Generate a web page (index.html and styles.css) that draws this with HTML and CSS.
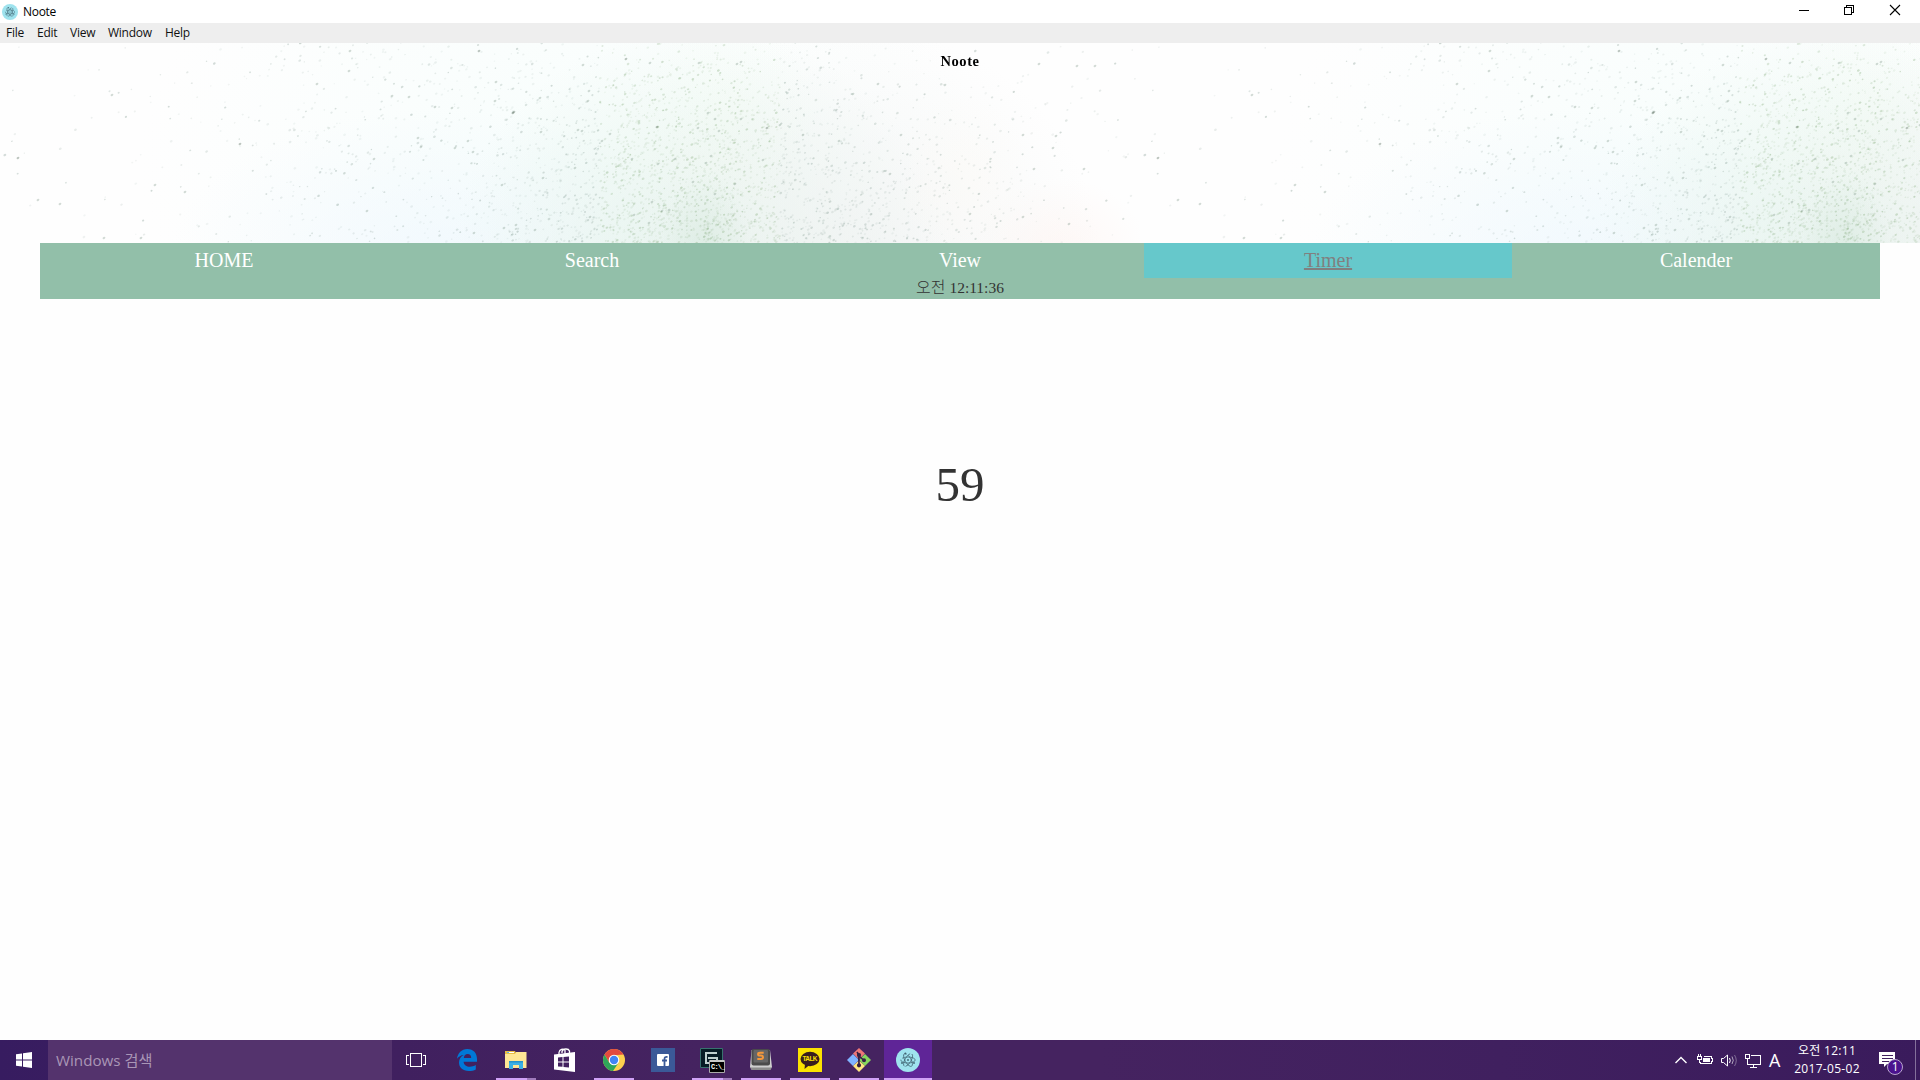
FILE: index.html
```
<!DOCTYPE html>
<html lang="ko">
<head>
<meta charset="utf-8">
<title>Noote</title>
<link rel="stylesheet" href="styles.css">
</head>
<body>
<svg width="0" height="0" class="defs">
  <symbol id="atom" viewBox="0 0 24 24">
    <circle cx="12" cy="12" r="12" fill="#9fe3ee"/>
    <g fill="none" stroke="#466b78" stroke-width=".8">
      <ellipse cx="12" cy="12" rx="7.200" ry="3" stroke-dasharray="17 2"/>
      <ellipse cx="12" cy="12" rx="7.200" ry="3" transform="rotate(60 12 12)" stroke-dasharray="19 2"/>
      <ellipse cx="12" cy="12" rx="7.200" ry="3" transform="rotate(120 12 12)" stroke-dasharray="15 2"/>
    </g>
    <g fill="#3f6370"><circle cx="12" cy="12" r=".9"/><circle cx="6" cy="15" r=".9"/><circle cx="18" cy="15" r=".9"/><circle cx="9.400" cy="5.500" r=".9"/></g>
  </symbol>
</svg>

<div class="titlebar">
  <svg class="app-icon" width="16" height="16"><use href="#atom"/></svg>
  <span class="title">Noote</span>
  <div class="controls">
    <svg width="46" height="20" viewBox="0 0 46 20" shape-rendering="crispEdges"><path d="M17 10.500h10" stroke="#000"/></svg>
    <svg width="46" height="20" viewBox="0 0 46 20" shape-rendering="crispEdges"><path d="M16.500 7.500h7v7h-7zM18.500 7.500v-2h7v7h-2" fill="none" stroke="#000"/></svg>
    <svg width="46" height="20" viewBox="0 0 46 20"><path d="M16 5l10 10M26 5l-10 10" stroke="#000" stroke-width="1.100"/></svg>
  </div>
</div>
<nav class="menubar"><span class="m-file">File</span><span class="m-edit">Edit</span><span class="m-view">View</span><span class="m-window">Window</span><span class="m-help">Help</span></nav>

<header class="banner">
  <canvas id="paint" class="paint" width="1920" height="200"></canvas>
  <h1>Noote</h1>
</header>

<section class="nav-panel">
  <nav class="tabs">
    <a>HOME</a><a>Search</a><a>View</a><a class="active">Timer</a><a>Calender</a>
  </nav>
  <div class="clock"><span class="ampm">오전</span> 12:11:36</div>
</section>

<main class="content"><div class="count">59</div></main>

<footer class="taskbar">
  <div class="start">
    <svg width="16" height="16" viewBox="0 0 16 16" fill="#fff"><path d="M0 2.200l6-.8V7.500H0zM7 1.200l9-1.200v7.500H7zM0 8.500h6v6.100l-6-.8zM7 8.500h9V16l-9-1.200z"/></svg>
  </div>
  <div class="search">Windows 검색</div>
  <div class="btn task-view">
    <svg width="20" height="14" viewBox="0 0 20 14" fill="none" stroke="#fff" shape-rendering="crispEdges"><path d="M4.500.5h11v13h-11zM3 2.500H.5v9H3M17 2.500h2.500v9H17"/></svg>
  </div>
  <div class="btn"><svg width="20" height="22" viewBox="0 0 20 22"><path fill="#0078d7" d="M0 9.800C.7 4.300 4.500 0 10.300 0 16.500 0 20 4.300 20 10v2.700H6.600c.2 3.400 3 5 6.200 5 2.300 0 4.200-.6 6-1.700v4.500c-1.900 1-4.300 1.500-7 1.500C5.600 22 2 18.500 2 13.600 2 10.300 3.800 7.500 6.700 6 4 6.200 1.600 7.600 0 9.800zM6.800 9h7.400c0-2.400-1.300-3.900-3.600-3.900C8.500 5.100 7.100 6.600 6.800 9z"/></svg></div>
  <div class="btn multi"><svg width="22" height="18" viewBox="0 0 22 18"><path fill="#e9bd45" d="M0 0h10l1 2h10v5H0z"/><path fill="#fff" d="M2 1h7v1H2z"/><path fill="#5cb7e9" d="M2 1h2v1H2z"/><path fill="#ffe695" d="M0 3h10l1-2h10.500v16H0z"/><path fill="#3bb0e5" d="M4 10h14v8h-4v-4H8v4H4z"/><path fill="#2493cc" d="M4 10h14v1.500H4z"/></svg></div>
  <div class="btn"><svg width="22" height="24" viewBox="0 0 22 24"><path fill="none" stroke="#fff" stroke-width="1.300" d="M5 7V4.500C5.500 1.500 9 .2 11 2v4M8 5V3.500C9 .3 14.500.2 15.500 3v3"/><path fill="#fff" d="M0 6.500L21 4v20L0 21.500z"/><path fill="#42215f" d="M4 9.500l4.500-.4V13.500H4zM9.500 9l5.500-.6v5.100H9.500zM4 14.500h4.500v4.300L4 18.400zM9.500 14.500H15v5.100l-5.500-.6z"/></svg></div>
  <div class="btn running"><svg width="22" height="22" viewBox="0 0 22 22"><circle cx="11" cy="11" r="11" fill="#fdd04e"/><path fill="#e34b3e" d="M1.500 5.500A11 11 0 0 1 20.500 5.500L11 6.200 6.300 13.700z"/><path fill="#2fa65a" d="M1.500 5.500A11 11 0 0 0 10 22l5.500-8.300-4.500 2-4.700-2z"/><circle cx="11" cy="11" r="5.300" fill="#fff"/><circle cx="11" cy="11" r="4.200" fill="#4285f4"/></svg></div>
  <div class="btn"><svg width="24" height="24" viewBox="0 0 24 24"><path fill="#3b5998" d="M0 0h24v24H0z"/><rect x="6" y="6" width="12" height="12" rx="1" fill="#fff"/><path fill="none" stroke="#3b5998" stroke-width="1.800" d="M13.500 18v-7c0-1.800.8-2.300 3-2M11 12.500h5"/></svg></div>
  <div class="btn multi"><svg width="26" height="26" viewBox="0 0 26 26"><path fill="#061c25" stroke="#39726f" d="M1.500 1.500h22v19h-22z"/><path fill="none" stroke="#bdd0ce" stroke-width="2" d="M18 6H7v10h6M9 11h9v2"/><path fill="#000" stroke="#aaa" d="M10.500 13.500h15v12h-15z"/><path fill="#c9c9c9" d="M11 13h14v2H11z"/><text x="12" y="22" class="prompt">C:\_</text></svg></div>
  <div class="btn running"><svg width="24" height="24" viewBox="0 0 24 24"><path fill="#cfcfcf" d="M2.500 2h18.500l2 17-1.500 2.500h-19L1 19z"/><path fill="#8c8c8c" d="M1.500 19.500h21L21.500 22h-19z"/><rect x="2.500" y="1" width="18.500" height="16.500" rx="2" fill="#4b4b4b"/><rect x="4.500" y="2" width="14.500" height="12.500" rx="1" fill="#666"/><path fill="none" stroke="#f5983b" stroke-width="2" d="M14.700 4.800H11c-2.600 0-2.600 2.800 0 2.800h1c2.700 0 2.700 3.400 0 3.400H8.300"/></svg></div>
  <div class="btn running"><svg width="24" height="24" viewBox="0 0 24 24"><path fill="#fbe300" d="M0 0h24v24H0z"/><ellipse cx="12" cy="11" rx="9.500" ry="7.200" fill="#381e1e"/><path fill="#381e1e" d="M7 16l-.5 5 5-4z"/><text x="4.500" y="13.300" class="talk" textLength="15">TALK</text></svg></div>
  <div class="btn running"><svg width="24" height="24" viewBox="0 0 24 24"><path fill="#ee7777" d="M12 0l6 5.500-6 6-6-6z"/><path fill="#80b3ff" d="M6 6l6 6-6 6-6-6z"/><path fill="#87d65d" d="M18 6l6 6-6 6-6-6z"/><path fill="#ffe680" d="M12 12.500l6 5.500-6 6-6-6z"/><g stroke="#352044" stroke-width="1.600" fill="#352044"><path d="M10 4l2 3v10M12 8l5 4.500"/><circle cx="12" cy="7" r="1.300"/><circle cx="12" cy="17.300" r="1.300"/><circle cx="17" cy="12.300" r="1.200"/></g></svg></div>
  <div class="btn running current"><svg width="24" height="24"><use href="#atom"/></svg></div>

  <div class="tray">
    <svg width="112" height="40" viewBox="1670 0 112 40" fill="none" stroke="#fff">
      <path stroke-width="1.400" d="M1675.500 23l5.500-5.500 5.500 5.500"/>
      <g shape-rendering="crispEdges"><path d="M1704 16.500h7.500v2h1v3h-1v2h-11v-2"/><path fill="#fff" stroke="none" d="M1703 18h7v4h-7z"/><path d="M1697.500 16.500h4v3h-4zM1698.500 16v-2M1700.500 16v-2M1699.500 20v3"/></g>
      <path d="M1721.500 18.500h2l4-3.500v11l-4-3.500h-2z"/><path d="M1729.500 18q1.500 2.500 0 5"/><path d="M1732 16.500q2.500 4 0 7.500" opacity=".6"/><path d="M1734.500 15q3.500 5.500 0 11" opacity=".35"/>
      <g shape-rendering="crispEdges"><path d="M1751 15.500h9.500v9h-13v-4M1753.500 25v2.500M1750 27.500h7M1745.500 14.500h4v4h-4zM1747.500 18v6"/></g>
    </svg>
    <span class="ime">A</span>
    <div class="datetime"><span>오전 12:11</span><span>2017-05-02</span></div>
    <svg class="notice" width="26" height="28" viewBox="0 0 26 28"><path fill="#fff" d="M1 2h16v12H9l-3 3v-3H1z"/><path stroke="#42215f" d="M4 5.500h11M4 8.500h11M4 11.500h7"/><circle cx="17" cy="17" r="7.500" fill="#4a128e" stroke="#b9a5ce"/><text x="13.800" y="21.200" class="badge">1</text></svg>
    <span class="show-desktop"></span>
  </div>
</footer>
<script src="paint.js"></script>
</body>
</html>
```

FILE: styles.css
```
* { box-sizing: border-box; }
body {
  margin: 0;
  height: 1080px;
  overflow: hidden;
  display: flex;
  flex-direction: column;
  background: #fefefe;
  color: #333;
  font-family: "Liberation Serif", "Noto Sans CJK KR", serif;
}
svg { display: block; flex: none; }
.defs { position: absolute; }

.titlebar, .menubar, .taskbar {
  font-family: "Open Sans", "Noto Sans CJK KR", sans-serif;
  flex: none;
}
.titlebar {
  height: 23px;
  display: flex;
  align-items: center;
  padding-left: 2px;
  background: #fff;
  color: #000;
  font-size: 12px;
}
.title { margin-left: 5px; letter-spacing: -.3px; }
.controls { display: flex; margin-left: auto; height: 100%; }

.menubar {
  height: 20px;
  padding-left: 6px;
  display: flex;
  background: #eee;
  color: #111;
  font-size: 12px;
  line-height: 19px;
  letter-spacing: -.25px;
}
.m-file { width: 31px; }
.m-edit { width: 33px; }
.m-view { width: 38px; }
.m-window { width: 57px; }

.banner { position: relative; height: 200px; flex: none; text-align: center; }
.paint { position: absolute; left: 0; top: 0; }
.banner h1 {
  position: relative;
  margin: 0;
  padding-top: 9px;
  color: #000;
  font-size: 14.500px;
  line-height: 18px;
  letter-spacing: .6px;
}

.nav-panel { flex: none; height: 56px; margin: 0 40px; background: #92bfa9; }
.tabs { display: grid; grid-template-columns: repeat(5, 1fr); height: 35px; }
.tabs a { color: #fff; font-size: 20px; line-height: 35px; text-align: center; }
.tabs .active { background: #66c8cb; color: #808080; text-decoration: underline; }
.clock { height: 21px; font-size: 15.500px; line-height: 20px; text-align: center; }
.ampm { font-size: 16px; font-weight: 300; }

.content { flex: 1; padding-top: 157px; text-align: center; }
.count { font-size: 49px; line-height: 58px; }

.taskbar {
  height: 40px;
  display: flex;
  background: linear-gradient(90deg, #371c60 0, #40205f 400px, #452360 700px, #452360 1100px, #40205f 1500px, #3a1b5c);
}
.start { width: 48px; display: grid; place-items: center; }
.search {
  width: 344px;
  padding-left: 8px;
  background: #54336d;
  color: #a996b6;
  font-size: 15.200px;
  line-height: 40px;
}
.btn {
  position: relative;
  width: 48px;
  height: 40px;
  margin-right: 1px;
  display: grid;
  place-items: center;
}
.task-view { margin-right: 3px; }
.running::after, .multi::after {
  content: "";
  position: absolute;
  left: 4px;
  bottom: 0;
  width: 40px;
  height: 2px;
  background: #d0a2f6;
}
.multi::after { background: linear-gradient(90deg, #d0a2f6 31px, #9f7abb 31px); }
.current { background: #5f2597; }
.current::after { left: 0; width: 48px; }
.prompt { font: bold 7px "Liberation Mono", monospace; fill: #fff; letter-spacing: -.8px; }
.talk { font: bold 6.500px "Liberation Sans", sans-serif; fill: #fbe300; }

.tray { display: flex; margin-left: auto; color: #fff; }
.ime { width: 12px; margin-left: -13px; font-size: 18px; line-height: 40px; }
.datetime {
  width: 88px;
  margin-left: 2px;
  display: flex;
  flex-direction: column;
  align-items: center;
  font-size: 12px;
  line-height: 18px;
  padding-top: 2px;
  letter-spacing: .3px;
}
.notice { margin: 10px 0 0 7px; }
.badge { font: 12px "Open Sans", sans-serif; fill: #fff; }
.show-desktop { width: 5px; margin-left: 11px; border-left: 1px solid #84709b; }
```

FILE: paint.js
```
// Splattered watercolor strip, tiled horizontally every 1140px.
const TILE = 1140, H = 200;
const tile = document.createElement('canvas');
tile.width = TILE;
tile.height = H;
const g = tile.getContext('2d');
g.fillStyle = '#fefefe';
g.fillRect(0, 0, TILE, H);

// x, y, horizontal radius, vertical radius, rgb, opacity
const washes = [
  [560, 120, 420, 300, '243,253,251', .6],
  [440, 215, 270, 150, '236,246,254', .6],
  [700, 225, 250, 240, '218,236,226', .6],
  [860, 215, 240, 230, '238,240,240', .6],
  [725, 80, 90, 110, '238,249,238', .25],
  [705, 205, 45, 75, '200,225,210', .35],
  [1060, 215, 90, 80, '254,240,236', .5],
  [963, 140, 70, 90, '253,250,244', .35]
];
for (const [x, y, rx, ry, rgb, a] of washes) {
  g.save();
  g.translate(x, y);
  g.scale(rx, ry);
  const r = g.createRadialGradient(0, 0, 0, 0, 0, 1);
  r.addColorStop(0, `rgba(${rgb},${a})`);
  r.addColorStop(.5, `rgba(${rgb},${a * .5})`);
  r.addColorStop(1, `rgba(${rgb},0)`);
  g.fillStyle = r;
  g.fillRect(-1, -1, 2, 2);
  g.restore();
}

let seed = 7321;
const rnd = () => (seed = (seed * 16807) % 2147483647) / 2147483647;
for (let i = 0; i < 21000; i++) {
  const x = rnd() * TILE, y = rnd() * H, t = y / H;
  const d = .012 + .6 * t * Math.exp(-(((x - 675) / 105) ** 2))
    + .22 * Math.exp(-(((x - 700) / 160) ** 2)) * (.4 + t)
    + .26 * t * Math.exp(-(((x - 850) / 160) ** 2))
    + .09 * Math.exp(-(((x - 430) / 190) ** 2));
  const keep = rnd(), a = rnd(), s = rnd();
  if (keep > d) continue;
  g.fillStyle = `rgba(${x > 600 && x < 780 ? '125,165,115' : '125,150,140'},${.09 + .26 * a * a * a})`;
  g.beginPath();
  g.ellipse(x, y, .7 + s * .8, .6 + s * .5, -.5, 0, 7);
  g.fill();
}

const drops = [
  [18,115],[155,142],[240,101],[350,8],[349,28],[317,41],[392,53],[409,54],[435,64],[452,65],
  [374,116],[367,168],[104,195],[141,195],[38,157],[60,161],[185,149],[479,8],[626,16],[583,22],
  [650,20],[699,20],[737,21],[741,19],[496,39],[513,70],[514,69],[495,58],[540,55],[589,48],
  [588,58],[541,89],[578,87],[582,88],[602,98],[610,91],[657,84],[698,85],[719,88],[767,85],
  [780,82],[715,76],[708,70],[741,76],[632,116],[658,121],[675,116],[706,120],[711,113],[575,125],
  [543,135],[693,139],[502,142],[735,141],[652,159],[662,168],[669,167],[715,151],[634,172],[649,180],
  [516,182],[504,185],[535,187],[474,190],[590,174],[763,117],[803,92],[839,98],[901,92],[890,131],
  [853,51],[878,41],[945,42],[1039,21],[1077,23],[1095,23],[1023,92],[1056,93],[1053,105],[1034,126],
  [1084,126],[1023,174],[1069,181],[970,171],[455,105],[468,98],[473,109],[421,104],[418,95],[112,52]
];
// The few heaviest splashes stay dark; the rest are faint.
const heavy = new Set([0, 2, 17, 18, 25, 26, 36, 39]);
drops.forEach(([x, y], i) => {
  g.fillStyle = heavy.has(i) ? 'rgba(100,120,105,.42)' : 'rgba(110,135,118,.3)';
  g.beginPath();
  g.ellipse(x, y, 1.5, 1, -.5, 0, 7);
  g.fill();
});

const out = document.getElementById('paint').getContext('2d');
out.drawImage(tile, 0, 0);
out.drawImage(tile, TILE, 0);
```
